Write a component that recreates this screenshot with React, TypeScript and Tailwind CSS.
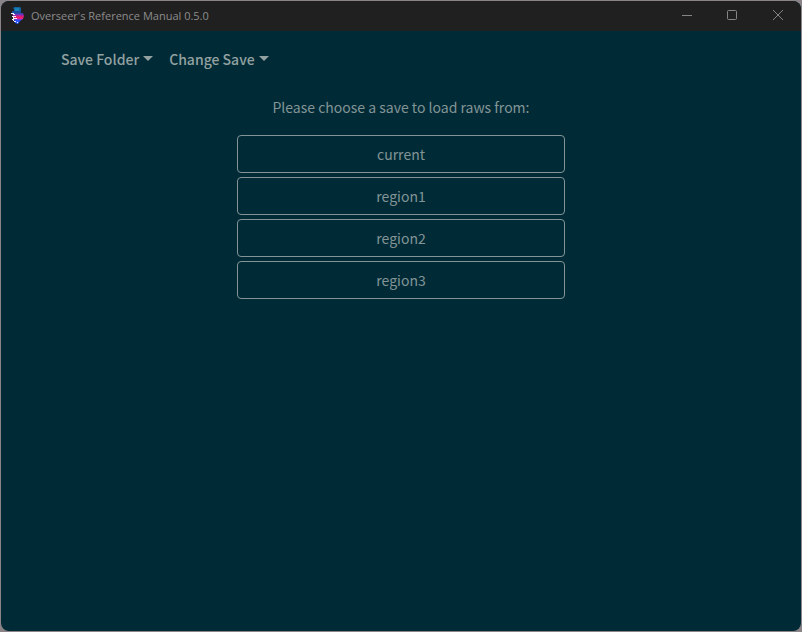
import type { ReactNode } from "react";

const saves = ["current", "region1", "region2", "region3"];
const menus = ["Save Folder", "Change Save"];

function AppIcon() {
  return (
    <svg width="16" height="18" viewBox="0 0 16 18" aria-hidden="true">
      <defs>
        <linearGradient id="body" x1="0" y1="0" x2="0" y2="1">
          <stop offset="0" stopColor="#1c4fb4" />
          <stop offset="0.2" stopColor="#9a24b4" />
          <stop offset="0.38" stopColor="#f81c58" />
          <stop offset="0.52" stopColor="#e020a0" />
          <stop offset="0.65" stopColor="#2a4cff" />
          <stop offset="1" stopColor="#2f6cff" />
        </linearGradient>
      </defs>
      <path d="M5 0h6l1 1v4H5V2H4z" fill="#12629c" />
      <path d="M6 1h4v3H6z" fill="#1a80bc" />
      <path d="M3 4h9v2H3z" fill="#1a4c9c" />
      <path d="M3 6h9l2 0 1 3-1 3-3 2-2 3-3-1-1-4z" fill="url(#body)" />
      <g fill="#f1edff" shapeRendering="crispEdges">
        <path d="M2 6h3v1H2zM4 7h2v1H4zM3 9h4v1H3zM4 10h1v1H4zM4 11h4v1H4zM3 12h2v1H3zM4 13h1v1H4zM5 14h2v1H5zM8 15h1v1H8z" />
      </g>
    </svg>
  );
}

function CaptionButton({ label, children }: { label: string; children: ReactNode }) {
  return (
    <button type="button" aria-label={label} className="flex h-full w-[46px] items-center justify-center">
      <svg width="12" height="12" viewBox="0 0 12 12" fill="none" stroke="#858585" aria-hidden="true">
        {children}
      </svg>
    </button>
  );
}

export default function App() {
  return (
    <div className="min-h-screen bg-[#8a8488] p-px">
      <div className="flex min-h-[calc(100vh-2px)] flex-col overflow-hidden rounded-lg bg-[#002b36] font-['Noto_Sans_CJK_JP','Noto_Sans',sans-serif] text-[#839496]">
        <header className="flex h-[30px] items-center bg-[#202020] pl-2">
          <AppIcon />
          <h1 className="ml-1.5 flex-1 font-['Open_Sans','Noto_Sans',sans-serif] text-[11px] text-[#8c8c8c]">
            Overseer's Reference Manual 0.5.0
          </h1>
          <CaptionButton label="Minimize">
            <path d="M2 5.5h10" />
          </CaptionButton>
          <CaptionButton label="Maximize">
            <rect x="1.5" y="0.5" width="9" height="9" rx="1" />
          </CaptionButton>
          <CaptionButton label="Close">
            <path d="M1 0l10 10M11 0L1 10" />
          </CaptionButton>
        </header>

        <nav className="flex h-14 items-center gap-4 px-[60px]">
          {menus.map((name) => (
            <button key={name} type="button" aria-haspopup="menu" className="flex items-center gap-1 text-[14px] leading-6 font-medium text-[#93a1a1]">
              {name}
              <svg width="10" height="12" viewBox="0 0 10 12" fill="currentColor" aria-hidden="true">
                <path d="M0 3h10L5 8z" />
              </svg>
            </button>
          ))}
        </nav>

        <main className="flex flex-col items-center px-4 pt-2">
          <p className="text-[14px] leading-6">Please choose a save to load raws from:</p>
          <div className="mt-4 flex w-full max-w-[328px] flex-col gap-1">
            {saves.map((save) => (
              <button key={save} type="button" className="h-[38px] rounded border border-[#839496] text-[14px] leading-6">
                {save}
              </button>
            ))}
          </div>
        </main>
      </div>
    </div>
  );
}
